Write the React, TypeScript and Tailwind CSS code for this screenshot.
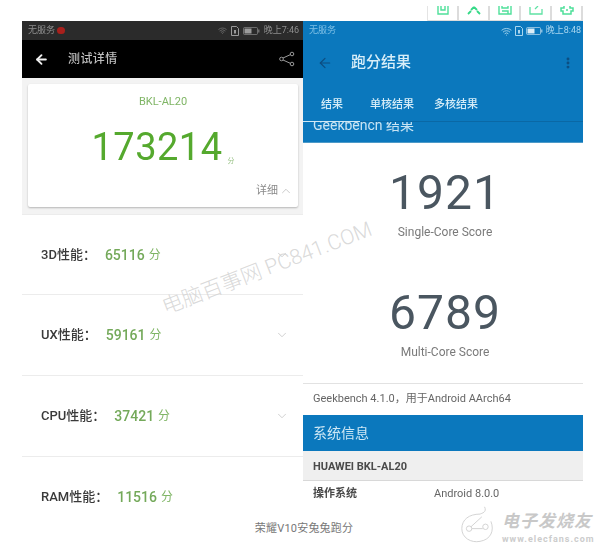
import { ChevronDown, ChevronUp, MoreVertical, ArrowLeft, Wifi } from 'lucide-react';

const FONT = "font-['Roboto','Noto_Sans_CJK_SC',sans-serif]";

const rows = [
  { name: '3D性能：', score: '65116', chevron: true, box: 'h-[80px] items-center' },
  { name: 'UX性能：', score: '59161', chevron: true, box: 'h-[81px] items-center' },
  { name: 'CPU性能：', score: '37421', chevron: true, box: 'h-[81px] items-center' },
  { name: 'RAM性能：', score: '11516', chevron: false, box: 'h-[49px] items-start pt-[31px]' },
];

function Battery({ color }: { color: string }) {
  return (
    <svg width="17" height="8" viewBox="0 0 17 8" fill="none">
      <rect x="0.5" y="0.5" width="14" height="7" rx="1" stroke={color} strokeOpacity="0.6" />
      <rect x="1.5" y="1.5" width="7" height="5" fill={color} />
      <rect x="15" y="2.5" width="1.5" height="3" fill={color} fillOpacity="0.6" />
    </svg>
  );
}

function Sim({ color }: { color: string }) {
  return (
    <svg width="8" height="10" viewBox="0 0 8 10" fill="none">
      <path d="M0.5 0.5H5.5L7.5 2.5V9.5H0.5Z" stroke={color} />
      <rect x="3" y="4" width="2" height="3.5" fill={color} />
    </svg>
  );
}

function TopIcons() {
  const cell = 'w-[31px] h-[15px] border-r-2 border-b border-[#dcdcdc] flex justify-center';
  return (
    <div className="h-[21px] pt-[6px] flex justify-end pr-[25px]">
      <div className="flex border-l border-[#e4e4e4]">
        <div className={cell}>
          <svg width="12" height="9" viewBox="0 0 12 9" fill="none" stroke="#4fe09a" strokeWidth="1.4"><path d="M1 0V8H11V0M4 0V4H8V0" /></svg>
        </div>
        <div className={cell}>
          <svg width="14" height="9" viewBox="0 0 14 9" fill="none" stroke="#35d987" strokeWidth="1.8"><path d="M1 8L4 5M7 1L4 4M7 1L10 4M13 8L10 5" /></svg>
        </div>
        <div className={cell}>
          <svg width="14" height="9" viewBox="0 0 14 9" fill="none" stroke="#4fe09a" strokeWidth="1.4"><path d="M1 0V8H13V0M4 5H10V8M4 0V2H10V0" /></svg>
        </div>
        <div className={cell}>
          <svg width="14" height="9" viewBox="0 0 14 9" fill="none" stroke="#5fe2a4" strokeWidth="1.3"><path d="M1 1V8H13V3M6 3L9 0" /></svg>
        </div>
        <div className={cell}>
          <svg width="14" height="9" viewBox="0 0 14 9" fill="none" stroke="#4fe09a" strokeWidth="1.5"><path d="M4 0V2H1V5H3V8H11V5H13V2H10V0M6 4H8" /></svg>
        </div>
      </div>
    </div>
  );
}

function LeftPhone() {
  return (
    <div className="w-[281px] h-[484px] flex flex-col overflow-hidden bg-white">
      <div className="h-[19px] shrink-0 bg-[#2b2b2b] flex items-center justify-between pl-[6px] pr-[4px] text-[9px] text-[#8f8f8f]">
        <div className="flex items-center gap-[2px]">
          <span>无服务</span>
          <span className="w-[8px] h-[7px] rounded-full bg-[#a8201c]" />
        </div>
        <div className="flex items-center gap-[4px]">
          <Wifi size={9} color="#777777" />
          <Sim color="#9a9a9a" />
          <Battery color="#9a9a9a" />
          <span>晚上7:46</span>
        </div>
      </div>
      <div className="h-[38px] shrink-0 bg-black flex items-center pl-[12px] pr-[8px]">
        <ArrowLeft size={15} color="#f0f0f0" strokeWidth={3} />
        <span className="ml-[19px] text-[12px] font-medium text-[#bdbdbd] tracking-[0.4px]">测试详情</span>
        <svg className="ml-auto" width="16" height="16" viewBox="0 0 16 16" fill="none" stroke="#9a9a9a" strokeWidth="1">
          <circle cx="2.5" cy="8" r="1.8" />
          <circle cx="13" cy="3" r="1.8" />
          <circle cx="13" cy="13" r="1.8" />
          <path d="M4 7L11.5 3.6M4 9L11.5 12.4" />
        </svg>
      </div>
      <div className="h-[136px] shrink-0 bg-[#f3f3f3] px-[6px] pt-[6px]">
        <div className="relative h-[123px] w-[270px] bg-white rounded-[2px] shadow-[0_1px_2px_rgba(0,0,0,0.25)] flex flex-col items-center">
          <div className="mt-[11px] text-[11px] leading-[14px] text-[#7fb565]">BKL-AL20</div>
          <div className="mt-[14px] flex items-end">
            <span className="text-[38px] leading-[48px] text-[#55a92e] tracking-[0.5px]">173214</span>
            <span className="ml-[5px] mb-[6px] text-[7px] leading-[8px] text-[#9cc48a]">分</span>
          </div>
          <div className="absolute right-[5px] bottom-[9px] flex items-center gap-[1px] text-[11px] leading-[14px] text-[#8a8a8a]">
            <span>详细</span>
            <ChevronUp size={14} color="#b5b5b5" strokeWidth={1.2} />
          </div>
        </div>
      </div>
      {rows.map((r) => (
        <div key={r.name} className={`${r.box} shrink-0 border-t border-[#ececec] first:border-t-0 flex pl-[19px] pr-[14px]`}>
          <span className="text-[13px] leading-[18px] font-medium text-[#3a3a3a]">{r.name}</span>
          <span className="ml-[9px] text-[14px] leading-[18px] font-medium text-[#74a95a]">{r.score}</span>
          <span className="ml-[4px] text-[12px] leading-[18px] text-[#7fb565]">分</span>
          {r.chevron && <ChevronDown className="ml-auto" size={14} color="#bdbdbd" strokeWidth={1.2} />}
        </div>
      ))}
    </div>
  );
}

function RightPhone() {
  return (
    <div className="w-[280px] h-[484px] flex flex-col overflow-hidden bg-white">
      <div className="h-[101px] shrink-0 bg-[#0b78bd] flex flex-col">
        <div className="h-[20px] shrink-0 flex items-center justify-between pl-[6px] pr-[2px] text-[9px] text-[#7fc0e6]">
          <span>无服务</span>
          <div className="flex items-center gap-[3px] text-[#a9d6ef]">
            <Wifi size={11} color="#a9d6ef" />
            <Sim color="#a9d6ef" />
            <Battery color="#dcedf7" />
            <span>晚上8:48</span>
          </div>
        </div>
        <div className="h-[43px] shrink-0 flex items-center pl-[14px] pr-[8px]">
          <ArrowLeft size={16} color="#0d4d80" strokeWidth={1.8} />
          <span className="ml-[18px] text-[15px] font-medium text-[#d8eef8]">跑分结果</span>
          <MoreVertical className="ml-auto" size={14} color="#0d4d80" strokeWidth={3} />
        </div>
        <div className="flex pl-[18px] pt-[13px] text-[11px] leading-[16px] font-medium text-[#d5ecf7]">
          <span>结果</span>
          <span className="ml-[27px]">单核结果</span>
          <span className="ml-[20px]">多核结果</span>
        </div>
        <div className="mt-auto h-[1px] bg-[#0a68a5] relative">
          <div className="absolute left-0 top-0 h-[1px] w-[57px] bg-[#cfe8f5]" />
        </div>
      </div>
      <div className="h-[21px] shrink-0 bg-[#0b78bd] border-b border-[#4d9ac8] pl-[10px] overflow-hidden">
        <div className="text-[14px] leading-[14px] -mt-[4px] text-[#c9e4f3]">Geekbench 结果</div>
      </div>
      <div className="h-[240px] shrink-0 pl-[4px] flex flex-col items-center">
        <div className="mt-[22px] text-[48px] leading-[56px] text-[#4a5660] tracking-[1px]">1921</div>
        <div className="mt-[3px] text-[12px] leading-[16px] text-[#7a7a7a]">Single-Core Score</div>
        <div className="mt-[45px] text-[48px] leading-[56px] text-[#4a5660] tracking-[1px]">6789</div>
        <div className="mt-[3px] text-[12px] leading-[16px] text-[#7a7a7a]">Multi-Core Score</div>
      </div>
      <div className="h-[32px] shrink-0 border-t border-[#e2e2e2] flex items-center pl-[10px] text-[11px] text-[#666666]">
        Geekbench 4.1.0，用于Android AArch64
      </div>
      <div className="h-[36px] shrink-0 bg-[#0b78bd] flex items-center pl-[10px] text-[14px] text-[#cfe8f5]">系统信息</div>
      <div className="h-[30px] shrink-0 bg-[#efefef] border-b border-[#d8d8d8] flex items-center pl-[10px] pt-[3px] text-[11px] font-bold text-[#4a4a4a]">
        HUAWEI BKL-AL20
      </div>
      <div className="h-[24px] shrink-0 flex items-center pl-[10px] pt-[3px] text-[11px]">
        <span className="w-[121px] font-bold text-[#4a4a4a]">操作系统</span>
        <span className="text-[#666666]">Android 8.0.0</span>
      </div>
    </div>
  );
}

export default function App() {
  return (
    <div className={`${FONT} relative w-[608px] h-[555px] bg-white overflow-hidden`}>
      <TopIcons />
      <div className="flex pl-[22px] blur-[0.4px]">
        <LeftPhone />
        <RightPhone />
      </div>
      <div className="mt-[16px] text-center text-[11px] leading-[16px] text-[#777777] tracking-[0.2px]">荣耀V10安兔兔跑分</div>

      {/* watermark over the two screens */}
      <div className="absolute left-[163px] top-[297px] -rotate-[21deg] origin-left text-[21px] leading-[22px] font-light text-[#d0d0d0]/80 whitespace-nowrap">
        电脑百事网 PC841.COM
      </div>

      {/* site logo, bottom right */}
      <div className="absolute left-[460px] top-[503px] flex items-start">
        <svg width="40" height="44" viewBox="0 0 44 44" fill="none" stroke="#cfcfcf" strokeWidth="1">
          <path d="M27 2C30 8 24 9 22 10C10 10 2 16 2 26C2 36 12 42 22 40C34 38 38 28 34 18" />
          <circle cx="10" cy="26" r="3" />
          <circle cx="28" cy="24" r="3" />
          <path d="M12 24L24 13M13 26H25" />
        </svg>
        <div className="ml-[2px] mt-[8px] flex flex-col items-start">
          <span className="italic font-bold text-[17px] leading-[20px] text-[#c8c8c8] tracking-[1px]">电子发烧友</span>
          <span className="mt-[3px] font-bold text-[9px] leading-[11px] text-[#cccccc] tracking-[1px]">www.elecfans.com</span>
        </div>
      </div>
    </div>
  );
}
